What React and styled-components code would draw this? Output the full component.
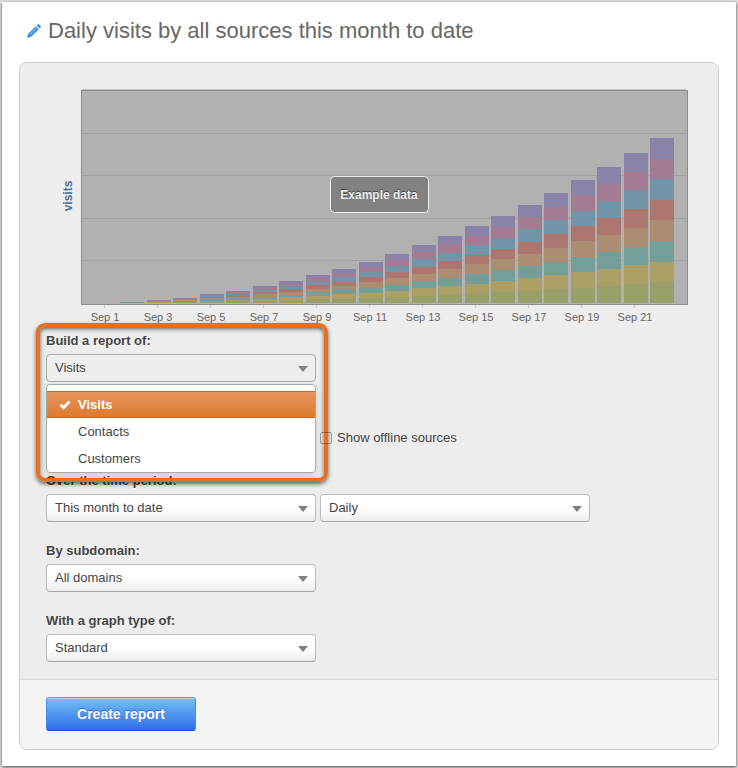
import React from "react";
import styled, { createGlobalStyle, css } from "styled-components";

const GlobalStyle = createGlobalStyle`
  *, *::before, *::after { box-sizing: border-box; }
  body {
    margin: 0;
    background: #e0e0e0;
    color: #444;
    font: 13px/18px "Liberation Sans", Arial, sans-serif;
  }
  button, select, input { font: inherit; color: inherit; }
`;

const Sheet = styled.main`
  margin: 2px;
  padding: 15px 17px 16px;
  background: #fff;
  box-shadow: 0 1px 3px rgba(0, 0, 0, 0.7);
`;

const Header = styled.header`
  display: flex;
  align-items: center;
  gap: 6px;
  padding-left: 7px;
  height: 28px;
  margin-bottom: 17px;
`;

const EditButton = styled.button`
  display: flex;
  padding: 0;
  border: 0;
  background: none;
  cursor: pointer;
`;

const Title = styled.h1`
  margin: 0;
  font-size: 22px;
  line-height: 28px;
  font-weight: 400;
  color: #666;
`;

const Panel = styled.form`
  border: 1px solid #ccc;
  border-radius: 8px;
  background: #ededed;
  overflow: hidden;
`;

const PanelBody = styled.div`
  padding: 25px 26px 17px;
`;

const PanelFooter = styled.footer`
  padding: 17px 26px 18px;
  border-top: 1px solid #d8d8d8;
  background: #f4f4f4;
`;

const Chart = styled.svg`
  display: block;
  width: 100%;
  height: auto;
  overflow: visible;
  font-family: "Liberation Sans", Arial, sans-serif;
`;

const AxisLabel = styled.text`
  font-size: 11px;
  fill: #666;
  text-anchor: middle;
`;

const AxisTitle = styled.text`
  font-size: 12px;
  font-weight: 700;
  fill: #4d759e;
  text-anchor: middle;
`;

const BadgeText = styled.text`
  font-size: 12px;
  font-weight: 700;
  fill: #eee;
  text-anchor: middle;
  text-shadow: 0 -1px 1px rgba(0, 0, 0, 0.5);
`;

const Fields = styled.div`
  display: flex;
  flex-direction: column;
  gap: 12px;
`;

const Field = styled.div`
  position: relative;
  min-height: 58px;
  display: flex;
  flex-direction: column;
  justify-content: flex-end;
`;

const Label = styled.label`
  height: 30px;
  padding-top: 8px;
  font-weight: 700;
  text-shadow: 0 1px 0 #fff;
`;

const Controls = styled.div`
  display: flex;
  align-items: center;
  gap: 4px;
`;

const SelectBox = styled.div`
  position: relative;
  flex: 0 1 270px;
  min-width: 0;
`;

const Select = styled.select`
  display: block;
  width: 100%;
  height: 28px;
  padding: 0 28px 0 8px;
  border: 1px solid #bbb;
  border-bottom-color: #a5a5a5;
  border-radius: 4px;
  appearance: none;
  outline: 0;
  background: linear-gradient(#fff 45%, #eee);
  ${(p) =>
    p.$open &&
    css`
      border-color: #aaa;
      background: #eee;
    `}
`;

const Arrow = styled.svg`
  position: absolute;
  right: 8px;
  top: 12px;
  pointer-events: none;
`;

const Menu = styled.ul`
  position: absolute;
  z-index: 1;
  top: 60px;
  left: 0;
  width: 270px;
  margin: 0;
  padding: 6px 0 0;
  list-style: none;
  border: 1px solid #aaa;
  border-radius: 4px;
  background: #fff;
  box-shadow: 0 2px 6px rgba(0, 0, 0, 0.15);
`;

const Option = styled.li`
  display: flex;
  align-items: center;
  height: 27px;
  padding-left: ${(p) => (p.$selected ? 12 : 31)}px;
  ${(p) =>
    p.$selected &&
    css`
      gap: 7px;
      border-top: 1px solid #cb651c;
      border-bottom: 1px solid #cb651c;
      background: linear-gradient(#e6955c, #dd7a2e);
      color: #fff;
      font-weight: 700;
    `}
`;

const Highlight = styled.div`
  position: absolute;
  z-index: 2;
  top: -1px;
  left: -10px;
  width: 292px;
  height: 159px;
  border: 4px solid #e5701f;
  border-radius: 9px;
  box-shadow: 0 2px 4px rgba(0, 0, 0, 0.6), inset 0 2px 4px rgba(0, 0, 0, 0.6);
  pointer-events: none;
`;

const CheckLabel = styled.label`
  display: flex;
  align-items: center;
  gap: 5px;
`;

const Checkbox = styled.input`
  position: relative;
  z-index: 3;
  appearance: none;
  width: 12px;
  height: 12px;
  margin: 0;
  border: 1px solid rgba(0, 0, 0, 0.3);
  border-radius: 2px;
  background: transparent;
`;

const CreateButton = styled.button`
  display: block;
  width: 150px;
  height: 34px;
  border: 1px solid #3e8ee6;
  border-top-color: #55a9e3;
  border-bottom-color: #1c50c8;
  border-radius: 3px;
  background: linear-gradient(#76c0f6, #2e6de8);
  box-shadow: inset 0 1px 0 rgba(255, 255, 255, 0.4);
  color: #fff;
  font-size: 14px;
  font-weight: 700;
  text-shadow: 0 -1px 1px rgba(0, 60, 160, 0.5);
`;

const SERIES = ["#989f69", "#ac9f66", "#739f98", "#ad8d71", "#ad7770", "#7393a9", "#a37b92", "#8a82a8"];
const TOTALS = [0, 1, 3, 5, 9, 12, 17, 22, 28, 34, 41, 49, 58, 67, 77, 87, 98, 110, 123, 136, 150, 165];
const BASE = 215;

function barX(day) {
  return Math.round(47.5 + 26.5 * day);
}

function VisitsChart() {
  return (
    <Chart viewBox="0 0 646 236" role="img" aria-label="Example data: daily visits">
      <rect x="35" y="1" width="605" height="1" fill="#c4c4c4" />
      <rect x="35" y="2" width="607" height="215" fill="#b1b1b1" />
      <g fill="#a1a1a1" shapeRendering="crispEdges">
        {[45, 87, 130, 172].map((y) => (
          <rect key={y} x="36" y={y} width="604" height="1" />
        ))}
      </g>
      <g shapeRendering="crispEdges">
        {TOTALS.map((total, day) =>
          SERIES.map((color, i) => {
            const low = Math.round((total * i) / 8);
            const high = Math.round((total * (i + 1)) / 8);
            return high > low ? (
              <rect key={`${day}-${color}`} x={barX(day)} y={BASE - high} width="24" height={high - low}
                fill={total === 1 ? SERIES[2] : color} />
            ) : null;
          })
        )}
      </g>
      <rect x="35.5" y="2.5" width="606" height="214" fill="none" stroke="#8c8c8c" />
      {TOTALS.map((_, day) =>
        day % 2 === 0 ? (
          <g key={day}>
            <rect x={barX(day) + 10} y="217" width="1" height="3" fill="#c0d0e0" />
            <AxisLabel x={barX(day) + 11} y="233">{`Sep ${day + 1}`}</AxisLabel>
          </g>
        ) : null
      )}
      <AxisTitle transform="translate(26 108) rotate(-90)">visits</AxisTitle>
      <rect x="284.5" y="88.5" width="98" height="36" rx="4" fill="#828282" stroke="#eee" />
      <BadgeText x="333" y="111">Example data</BadgeText>
    </Chart>
  );
}

function Dropdown({ id, value, open, ...rest }) {
  return (
    <SelectBox>
      <Select id={id} $open={open} {...rest}>
        <option>{value}</option>
      </Select>
      <Arrow width="10" height="6" viewBox="0 0 10 6" aria-hidden="true">
        <path d="M0 0H10L5 6Z" fill="#808080" />
      </Arrow>
    </SelectBox>
  );
}

export default function App() {
  return (
    <>
      <GlobalStyle />
      <Sheet>
        <Header>
          <EditButton type="button" aria-label="Edit title">
            <svg width="16" height="16" viewBox="0 0 16 16">
              <path d="M1 15L2.200 10.800L9.800 3.200L12.800 6.200L5.200 13.800Z" fill="#3b8eea" />
              <path d="M10.600 2.400L11.600 1.400Q12.300 .8 13 1.400L14.600 3Q15.200 3.700 14.600 4.400L13.600 5.400Z" fill="#3b8eea" />
              <path d="M4 11.500L10.300 5.200" stroke="#a8d0fa" />
            </svg>
          </EditButton>
          <Title>Daily visits by all sources this month to date</Title>
        </Header>
        <Panel onSubmit={(e) => e.preventDefault()}>
          <PanelBody>
            <VisitsChart />
            <Fields>
              <Field>
                <Label htmlFor="metric">Build a report of:</Label>
                <Controls>
                  <Dropdown id="metric" value="Visits" open />
                </Controls>
                <Menu role="listbox" aria-label="Report of">
                  <Option role="option" aria-selected="true" $selected>
                    <svg width="12" height="10" viewBox="0 0 12 10" aria-hidden="true">
                      <path d="M1.500 4.800L4.600 7.800L10.500 1.500" fill="none" stroke="#fff" strokeWidth="2.800" />
                    </svg>
                    Visits
                  </Option>
                  <Option role="option" aria-selected="false">Contacts</Option>
                  <Option role="option" aria-selected="false">Customers</Option>
                </Menu>
                <Highlight />
              </Field>
              <Field>
                <Controls>
                  <Dropdown value="" aria-label="Sources" />
                  <CheckLabel>
                    <Checkbox type="checkbox" />
                    Show offline sources
                  </CheckLabel>
                </Controls>
              </Field>
              <Field>
                <Label htmlFor="period">Over the time period:</Label>
                <Controls>
                  <Dropdown id="period" value="This month to date" />
                  <Dropdown value="Daily" aria-label="Interval" />
                </Controls>
              </Field>
              <Field>
                <Label htmlFor="subdomain">By subdomain:</Label>
                <Controls>
                  <Dropdown id="subdomain" value="All domains" />
                </Controls>
              </Field>
              <Field>
                <Label htmlFor="graph">With a graph type of:</Label>
                <Controls>
                  <Dropdown id="graph" value="Standard" />
                </Controls>
              </Field>
            </Fields>
          </PanelBody>
          <PanelFooter>
            <CreateButton type="submit">Create report</CreateButton>
          </PanelFooter>
        </Panel>
      </Sheet>
    </>
  );
}
